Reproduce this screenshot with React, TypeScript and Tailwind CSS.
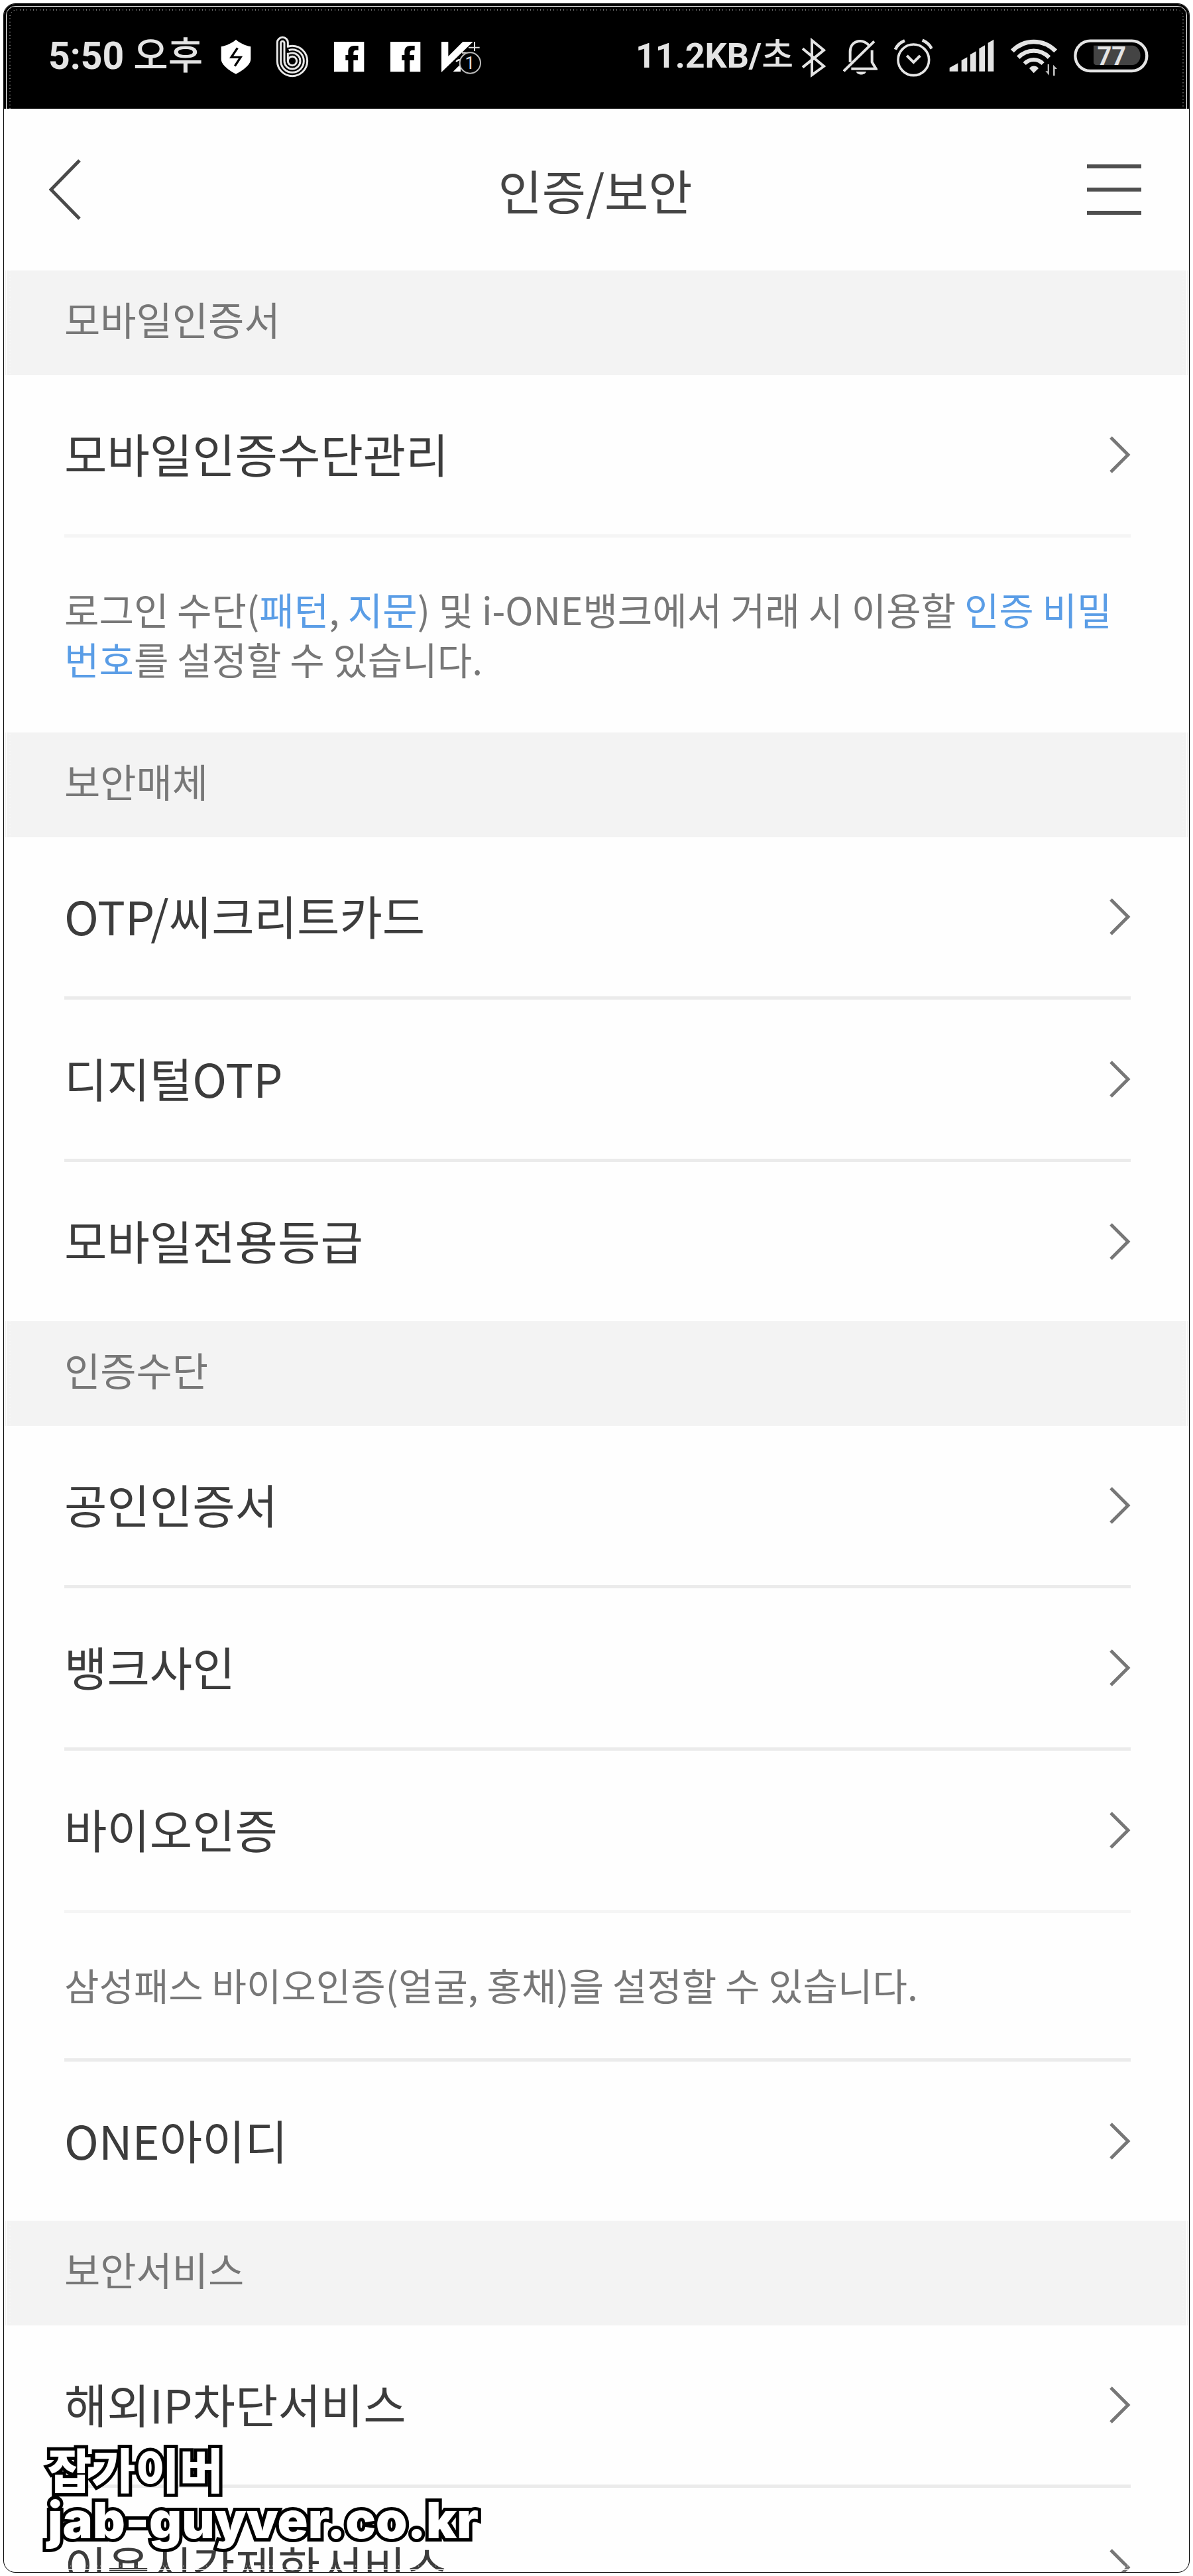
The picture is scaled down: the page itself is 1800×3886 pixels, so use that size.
import type { ReactNode } from "react";

type Row =
  | { kind: "link"; label: string; line?: "light" | "normal" }
  | { kind: "note"; body: ReactNode; line?: "light" | "normal" };

type Section = { title: string; rows: Row[] };

const SECTIONS: Section[] = [
  {
    title: "모바일인증서",
    rows: [
      { kind: "link", label: "모바일인증수단관리", line: "light" },
      {
        kind: "note",
        body: (
          <>
            로그인 수단(<Mark>패턴</Mark>, <Mark>지문</Mark>) 및 i-ONE뱅크에서
            거래 시 이용할 <Mark>인증 비밀번호</Mark>를 설정할 수 있습니다.
          </>
        ),
      },
    ],
  },
  {
    title: "보안매체",
    rows: [
      { kind: "link", label: "OTP/씨크리트카드", line: "normal" },
      { kind: "link", label: "디지털OTP", line: "normal" },
      { kind: "link", label: "모바일전용등급" },
    ],
  },
  {
    title: "인증수단",
    rows: [
      { kind: "link", label: "공인인증서", line: "normal" },
      { kind: "link", label: "뱅크사인", line: "normal" },
      { kind: "link", label: "바이오인증", line: "light" },
      {
        kind: "note",
        body: "삼성패스 바이오인증(얼굴, 홍채)을 설정할 수 있습니다.",
        line: "normal",
      },
      { kind: "link", label: "ONE아이디" },
    ],
  },
  {
    title: "보안서비스",
    rows: [
      { kind: "link", label: "해외IP차단서비스", line: "normal" },
      { kind: "link", label: "이용시간제한서비스", line: "normal" },
    ],
  },
];

const LINES = {
  light: "border-b-[5px] border-[#f5f5f5]",
  normal: "border-b-[5px] border-[#ebebeb]",
};

export default function App() {
  return (
    <div className="h-screen bg-white p-[5px] font-['Noto_Sans_CJK_KR',sans-serif]">
      <div className="relative flex h-full flex-col overflow-hidden rounded-[18px] border border-black bg-[#fefefe]">
        <StatusBar />

        {/* ================= TITLE BAR ================= */}
        <header className="flex h-[244px] shrink-0 items-center justify-between pl-[68px] pr-[72px]">
          <button type="button" aria-label="뒤로">
            <svg width="82" height="92" viewBox="0 0 82 92" fill="none" aria-hidden="true">
              <path d="M46 2 3 46l43 44" stroke="#4a4a4a" strokeWidth="5" />
            </svg>
          </button>
          <h1 className="text-[72px] leading-[100px] text-[#444]">인증/보안</h1>
          <button type="button" aria-label="메뉴">
            <svg width="82" height="92" viewBox="0 0 82 92" fill="none" aria-hidden="true">
              <path d="M0 11h82M0 46h82M0 81h82" stroke="#4f4f4f" strokeWidth="6" />
            </svg>
          </button>
        </header>

        {/* ================= LIST ================= */}
        <main className="min-h-0 flex-1 overflow-hidden">
          {SECTIONS.map((section) => (
            <section key={section.title}>
              <h2 className="bg-[#f3f3f3] px-[91px] pb-[42px] pt-[30px] text-[59px] leading-[86px] text-[#777]">
                {section.title}
              </h2>
              <ul className="pl-[91px] pr-[88px]">
                {section.rows.map((row, i) => (
                  <li key={i} className={row.line ? LINES[row.line] : ""}>
                    {row.kind === "link" ? (
                      <a
                        href="#"
                        className="flex h-[240px] items-center justify-between text-[70px] leading-[100px] text-[#3c3c3c]"
                      >
                        <span className="pb-1">{row.label}</span>
                        <IconChevron />
                      </a>
                    ) : (
                      <p className="pb-[74px] pt-[70px] text-[57px] leading-[75px] text-[#777]">
                        {row.body}
                      </p>
                    )}
                  </li>
                ))}
              </ul>
            </section>
          ))}
        </main>

        {/* ================= WATERMARK ================= */}
        <p className="pointer-events-none absolute bottom-[40px] left-[66px] font-black leading-[78px] text-white [-webkit-text-stroke:10px_black] [paint-order:stroke_fill]">
          <span className="block text-[72px]">잡가이버</span>
          <span className="block font-['Inter',sans-serif] text-[76px]">jab-guyver.co.kr</span>
        </p>

        {/* inner frame lines */}
        <div className="pointer-events-none absolute inset-[3px] rounded-[14px] border border-white" />
        <svg className="pointer-events-none absolute inset-[9px] h-[calc(100%-18px)] w-[calc(100%-18px)] overflow-visible" aria-hidden="true">
          <rect width="100%" height="100%" rx="10" fill="none" stroke="#fff" strokeDasharray="1 4" />
        </svg>
      </div>
    </div>
  );
}

function Mark({ children }: { children: ReactNode }) {
  return <span className="text-[#5a9de6]">{children}</span>;
}

/* ================= STATUS BAR ================= */

function StatusBar() {
  return (
    <div className="flex h-[158px] shrink-0 items-center justify-between bg-black pl-[67px] pr-[60px] font-['Roboto','Noto_Sans_CJK_KR',sans-serif] font-medium text-[#e4e4e4]">
      <div className="flex items-center">
        <span className="mr-2 text-[57px] leading-[72px]">
          <b className="font-bold">5:50</b> 오후
        </span>

        {/* shield */}
        <svg width="85" height="64" viewBox="-12 36 255 192" aria-hidden="true">
          <path
            d="M114 56c14 14 44 28 67 32v56c0 28-40 54-67 68-27-14-67-40-67-68V88c23-4 53-18 67-32Z"
            fill="#fff"
          />
          <path d="m121 94-28 42h42l-26 40" fill="none" stroke="#000" strokeWidth="10" />
        </svg>

        {/* bithumb */}
        <svg width="85" height="64" viewBox="241 36 255 192" fill="none" stroke="#e8e8e8" strokeWidth="9" aria-hidden="true">
          <path d="M347 92V70a24 24 0 0 0-48 0v83a68 68 0 1 0 68-68c-6 0-10 0-16 2" />
          <path d="M347 152v-36M331 153V72a8 8 0 0 0-16 0v81a52 52 0 1 0 52-52c-6 0-11 1-16 3" />
          <path d="M331 153a36 36 0 1 0 36-36c-6 0-11 1-16 4" />
          <circle cx="367" cy="153" r="20" />
        </svg>

        <IconFacebook />
        <IconFacebook />

        {/* vaccine */}
        <svg width="85" height="64" viewBox="1001 36 255 192" aria-hidden="true">
          <path d="M1037 66h31v66l66-66h46l-143 138V66Z" fill="#fff" />
          <path d="m1090 201 34-34v34Z" fill="#fff" />
          <path d="M1104 156c8-10 18-12 24 0" stroke="#fff" strokeWidth="8" fill="none" />
          <path d="M1187 66v42M1160 92h50M1130 116h34" stroke="#ddd" strokeWidth="6" />
          <circle cx="1167" cy="162" r="47" fill="#000" stroke="#bbb" strokeWidth="6" />
          <text x="1166" y="190" textAnchor="middle" fontSize="80" fontWeight="400" fill="#ddd">
            1
          </text>
        </svg>
      </div>

      <div className="flex items-center gap-[25px]">
        <div className="flex items-center gap-[12px]">
          <span className="text-[52px] leading-[72px]">
            <b className="font-bold">11.2KB/</b>초
          </span>
          {/* bluetooth */}
          <svg width="38" height="64" viewBox="54 36 114 192" aria-hidden="true">
            <path
              d="m60 97 96 80-54 39V60l54 44-96 78"
              fill="none"
              stroke="#e4e4e4"
              strokeWidth="12"
            />
          </svg>
        </div>

        {/* silent bell */}
        <svg width="52" height="64" viewBox="243 36 156 192" fill="none" stroke="#e4e4e4" aria-hidden="true">
          <path d="M275 158v-46c0-58 68-62 88-24M374 104v54l18 30H280" strokeWidth="12" />
          <path d="M246 199 384 64" strokeWidth="12" />
          <path d="M302 201h46c-6 18-40 18-46 0Z" fill="#e4e4e4" stroke="none" />
        </svg>

        {/* alarm */}
        <svg width="58" height="64" viewBox="480 36 174 192" fill="none" stroke="#e4e4e4" aria-hidden="true">
          <circle cx="568" cy="148" r="70" strokeWidth="11" />
          <path d="m538 129 30 30 30-30" strokeWidth="12" />
          <path d="M486 101c6-16 22-32 42-40M650 97c-8-16-24-30-42-38" strokeWidth="14" />
        </svg>

        {/* signal */}
        <svg width="68" height="64" viewBox="720 36 204 192" fill="#e4e4e4" aria-hidden="true">
          <path d="M722 184l38-21v37h-38ZM776 150l26-14v64h-26ZM816 124l26-15v91h-26ZM856 97l26-15v118h-26ZM896 71l26-15v144h-26Z" />
        </svg>

        {/* wifi */}
        <svg width="70" height="64" viewBox="72 36 210 192" fill="none" stroke="#e4e4e4" aria-hidden="true">
          <path d="M79 108c54-56 140-56 196 0" strokeWidth="20" />
          <path d="M106 137c40-40 100-40 140 0" strokeWidth="19" />
          <path d="M134 165c24-24 60-24 84 0" strokeWidth="18" />
          <path d="M156 186c12-14 30-14 42 0l-22 22Z" fill="#e4e4e4" stroke="none" />
          <path d="M246 168v50l-17-19h10v-31ZM264 220v-50l18 19h-10v31Z" fill="#bbb" stroke="none" />
        </svg>

        {/* battery */}
        <svg width="114" height="64" viewBox="360 36 342 192" aria-hidden="true">
          <rect x="367" y="62" width="324" height="136" rx="68" fill="none" stroke="#e4e4e4" strokeWidth="13" />
          <path d="M450 83h176c18 0 36 20 36 45s-18 43-36 43H462c-8 0-12-5-12-12Z" fill="#444" />
          <text x="532" y="170" textAnchor="middle" fontSize="114" fontWeight="700" fill="#e4e4e4">
            77
          </text>
        </svg>
      </div>
    </div>
  );
}

/* ================= ICONS ================= */

function IconFacebook() {
  return (
    <svg width="85" height="64" viewBox="496 36 255 192" aria-hidden="true">
      <path
        d="M556 66h136v136h-48v-52h20v-24h-20v-10c0-8 4-12 12-12h10V84h-18c-20 0-28 12-28 28v14h-12v24h12v52h-64Z"
        fill="#fff"
      />
    </svg>
  );
}

function IconChevron() {
  return (
    <svg width="32" height="56" viewBox="0 0 32 56" fill="none" aria-hidden="true">
      <path d="m2 2 26 26L2 54" stroke="#777" strokeWidth="5" />
    </svg>
  );
}
